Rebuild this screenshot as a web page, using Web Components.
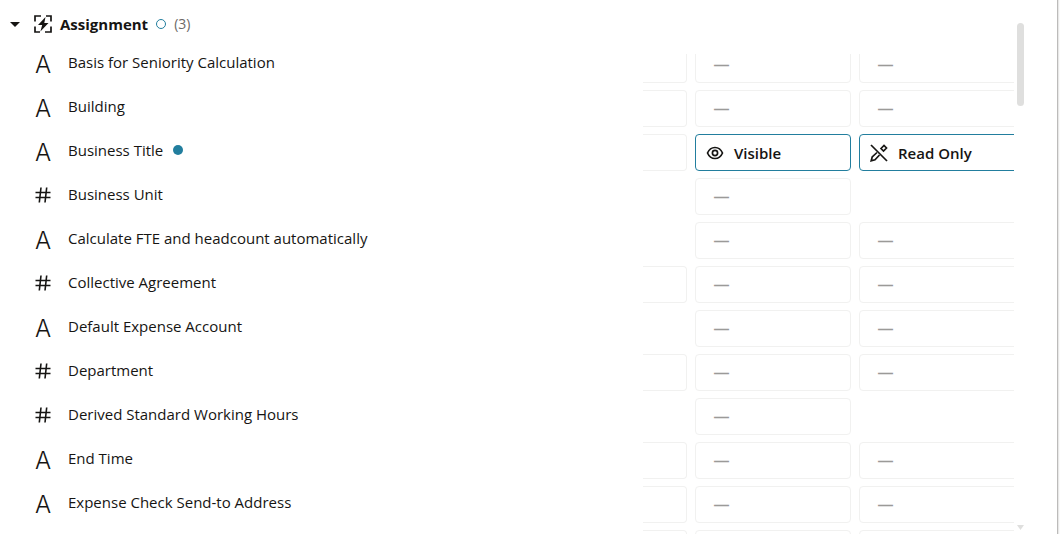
<!DOCTYPE html>
<html lang="en">
<head>
<meta charset="utf-8">
<title>Assignment fields</title>
<style>
  html, body { margin: 0; height: 100%; }
  body {
    background: #fff;
    color: #161513;
    font-family: "Open Sans", "Noto Sans", sans-serif;
    font-size: 15px;
    line-height: 20px;
    overflow: hidden;
  }
</style>
</head>
<body>
<rules-panel></rules-panel>

<template id="field-icon">
  <style>
    :host { display: flex; align-items: center; justify-content: center; width: 18px; height: 20px; padding-top: 2px; flex: none; }
    svg { display: block; fill: none; stroke: currentColor; stroke-width: 1.6; }
    .letter { font-family: Inter, sans-serif; font-weight: 300; font-size: 24px; line-height: 20px; padding-top: 4px; }
  </style>
</template>

<template id="field-row">
  <style>
    :host { display: flex; align-items: center; gap: 16px; height: 44px; padding-left: 34px; white-space: nowrap; }
    .dot { width: 10px; height: 10px; border-radius: 50%; background: #227e9e; margin-left: -6px; }
  </style>
  <field-icon></field-icon>
  <span><slot></slot></span>
</template>

<template id="group-header">
  <style>
    :host { display: flex; }
    button {
      display: flex; align-items: center; gap: 8px; height: 32px; margin: 0; padding: 0 0 0 10px;
      border: 0; background: none; font: inherit; color: inherit; cursor: pointer;
    }
    svg { display: block; flex: none; }
    .caret { margin-right: 6px; }
    strong { font-weight: 700; }
    .ring { box-sizing: border-box; width: 10px; height: 10px; border: 1px solid #227e9e; border-radius: 50%; }
    .count { font-size: 14px; color: #6b6966; }
  </style>
  <button type="button" aria-expanded="true">
    <svg class="caret" width="10" height="5" viewBox="0 0 10 5"><path d="M0 0h10L5 5z" fill="currentColor"/></svg>
    <svg width="18" height="18" viewBox="0 0 18 18" fill="none" stroke="currentColor" stroke-width="1.700">
      <path d="M7 1H1v5.500M12 1h5v5.500M1 11.500v5.500h5M17 11.500v5.500h-6"/>
      <path d="M11.500 2 4 10h4.200l-1.800 6.500L14.500 8h-4.200z" fill="currentColor" stroke="none"/>
    </svg>
    <strong><slot></slot></strong>
    <span class="ring"></span>
    <span class="count"></span>
  </button>
</template>

<template id="rule-cell">
  <style>
    :host { display: block; width: 156px; flex: none; }
    :host([tail]) { width: 44px; }
    :host([wide]) { width: 180px; }
    :host([empty]) { visibility: hidden; }
    button {
      box-sizing: border-box; display: flex; align-items: center; gap: 10px;
      width: 100%; height: 37px; margin: 0; padding: 0 0 0 10px;
      border: 1px solid #f1f1f0; border-radius: 4px; background: none;
      font: inherit; font-weight: 600; color: inherit; cursor: pointer;
    }
    :host([tail]) button { border-left: 0; border-radius: 0 4px 4px 0; }
    button.set { border-color: #227e9e; }
    button.unset { padding: 1px 0 0 18px; color: #9b9a98; font-family: "Liberation Sans", sans-serif; font-weight: 700; font-size: 15px; }
    svg { display: block; flex: none; }
  </style>
  <button type="button"></button>
</template>

<template id="rule-row">
  <style>
    :host { display: flex; gap: 8px; height: 44px; }
  </style>
</template>

<template id="scroll-track">
  <style>
    :host { display: flex; flex-direction: column; justify-content: space-between; align-items: center; width: 7px; padding: 23px 0 4px; }
    .thumb { width: 7px; height: 83px; border-radius: 4px; background: #dfdfde; }
    svg { display: block; }
  </style>
  <div class="thumb"></div>
  <svg width="7" height="5" viewBox="0 0 7 5"><path d="M0 0h7L3.500 5z" fill="#dfdfde"/></svg>
</template>

<template id="rules-panel">
  <style>
    :host { display: flex; box-sizing: border-box; height: 100vh; overflow: hidden; border-right: 1px solid #fafafa; }
    .frame { display: flex; flex: 1; min-width: 0; border-right: 1px solid #e8e8e7; }
    .inner { display: flex; flex: 1; min-width: 0; border-right: 1px solid #bcbbba; padding-right: 33px; gap: 3px; }
    .tree { flex: 1; min-width: 0; padding-top: 8px; }
    .grid { width: 35vw; flex: none; margin-top: 54px; overflow: hidden; }
    .rows { margin-top: -8px; }
  </style>
  <div class="frame"><div class="inner">
    <section class="tree">
      <group-header count="3">Assignment</group-header>
      <div class="fields"></div>
    </section>
    <section class="grid"><div class="rows"></div></section>
    <scroll-track></scroll-track>
  </div></div>
</template>

<script>
  class Base extends HTMLElement {
    constructor() {
      super();
      const t = document.getElementById(this.localName);
      this.attachShadow({ mode: 'open' }).append(t.content.cloneNode(true));
    }
    find(sel) { return this.shadowRoot.querySelector(sel); }
  }

  class FieldIcon extends Base {
    connectedCallback() {
      const box = document.createElement('div');
      if (this.getAttribute('type') === 'number') {
        box.innerHTML = '<svg width="16" height="16" viewBox="0 0 16 16"><path d="M6 .5 4.300 15.500M11.700 .5 10 15.500M.500 5.500h15M.500 10.500h15"/></svg>';
      } else {
        box.className = 'letter';
        box.textContent = 'A';
      }
      this.shadowRoot.append(box);
    }
  }

  class FieldRow extends Base {
    connectedCallback() {
      this.find('field-icon').setAttribute('type', this.getAttribute('type'));
      if (this.hasAttribute('changed')) {
        const dot = document.createElement('span');
        dot.className = 'dot';
        this.shadowRoot.append(dot);
      }
    }
  }

  class GroupHeader extends Base {
    connectedCallback() { this.find('.count').textContent = '(' + this.getAttribute('count') + ')'; }
  }

  const ICONS = {
    'Visible': '<svg width="18" height="18" viewBox="0 0 18 18" fill="none" stroke="currentColor" stroke-width="1.7"><path d="M1.500 9C3 5.500 5.800 3.500 9 3.500S15 5.500 16.500 9C15 12.500 12.200 14.500 9 14.500S3 12.500 1.500 9z"/><circle cx="9" cy="9" r="2.600"/></svg>',
    'Read Only': '<svg width="18" height="18" viewBox="0 0 18 18" fill="none" stroke="currentColor" stroke-width="1.7"><path d="M1 1 17 17"/><path d="M7 8.500 2.200 13 1.200 16.800 5 15.800 9.500 11M11 4.500 14 1.500 16.500 4 13.500 7z"/></svg>'
  };

  class RuleCell extends Base {
    connectedCallback() {
      const value = this.getAttribute('value');
      const b = this.find('button');
      b.className = value ? 'set' : 'unset';
      if (this.hasAttribute('tail') || this.hasAttribute('blank')) return;
      b.innerHTML = value ? ICONS[value] + '<span></span>' : '<span></span>';
      b.lastElementChild.textContent = value || '—';
    }
  }

  class RuleRow extends Base {
    fill(list, blank) {
      list.forEach((c, i) => {
        if (c === null && i === 2) return;
        const el = document.createElement('rule-cell');
        if (i === 0) el.setAttribute('tail', '');
        if (i === 2) el.setAttribute('wide', '');
        if (blank) el.setAttribute('blank', '');
        if (c === null) el.setAttribute('empty', '');
        else el.setAttribute('value', c);
        this.shadowRoot.append(el);
      });
    }
  }

  class ScrollTrack extends Base {}

  const FIELDS = [
    ['text', 'Basis for Seniority Calculation', ['', '', '']],
    ['text', 'Building', ['', '', '']],
    ['text', 'Business Title', ['', 'Visible', 'Read Only'], true],
    ['number', 'Business Unit', [null, '', null]],
    ['text', 'Calculate FTE and headcount automatically', [null, '', '']],
    ['number', 'Collective Agreement', ['', '', '']],
    ['text', 'Default Expense Account', [null, '', '']],
    ['number', 'Department', ['', '', '']],
    ['number', 'Derived Standard Working Hours', [null, '', null]],
    ['text', 'End Time', ['', '', '']],
    ['text', 'Expense Check Send-to Address', ['', '', '']]
  ];

  class RulesPanel extends Base {
    connectedCallback() {
      for (const [type, name, cells, changed] of FIELDS) {
        const f = document.createElement('field-row');
        f.setAttribute('type', type);
        if (changed) f.setAttribute('changed', '');
        f.textContent = name;
        this.find('.fields').append(f);
        this.addRow(cells);
      }
      this.addRow(['', '', ''], true);
    }
    addRow(cells, blank) {
      const r = document.createElement('rule-row');
      r.fill(cells, blank);
      this.find('.rows').append(r);
    }
  }

  customElements.define('field-icon', FieldIcon);
  customElements.define('field-row', FieldRow);
  customElements.define('group-header', GroupHeader);
  customElements.define('rule-cell', RuleCell);
  customElements.define('rule-row', RuleRow);
  customElements.define('scroll-track', ScrollTrack);
  customElements.define('rules-panel', RulesPanel);
</script>
</body>
</html>
